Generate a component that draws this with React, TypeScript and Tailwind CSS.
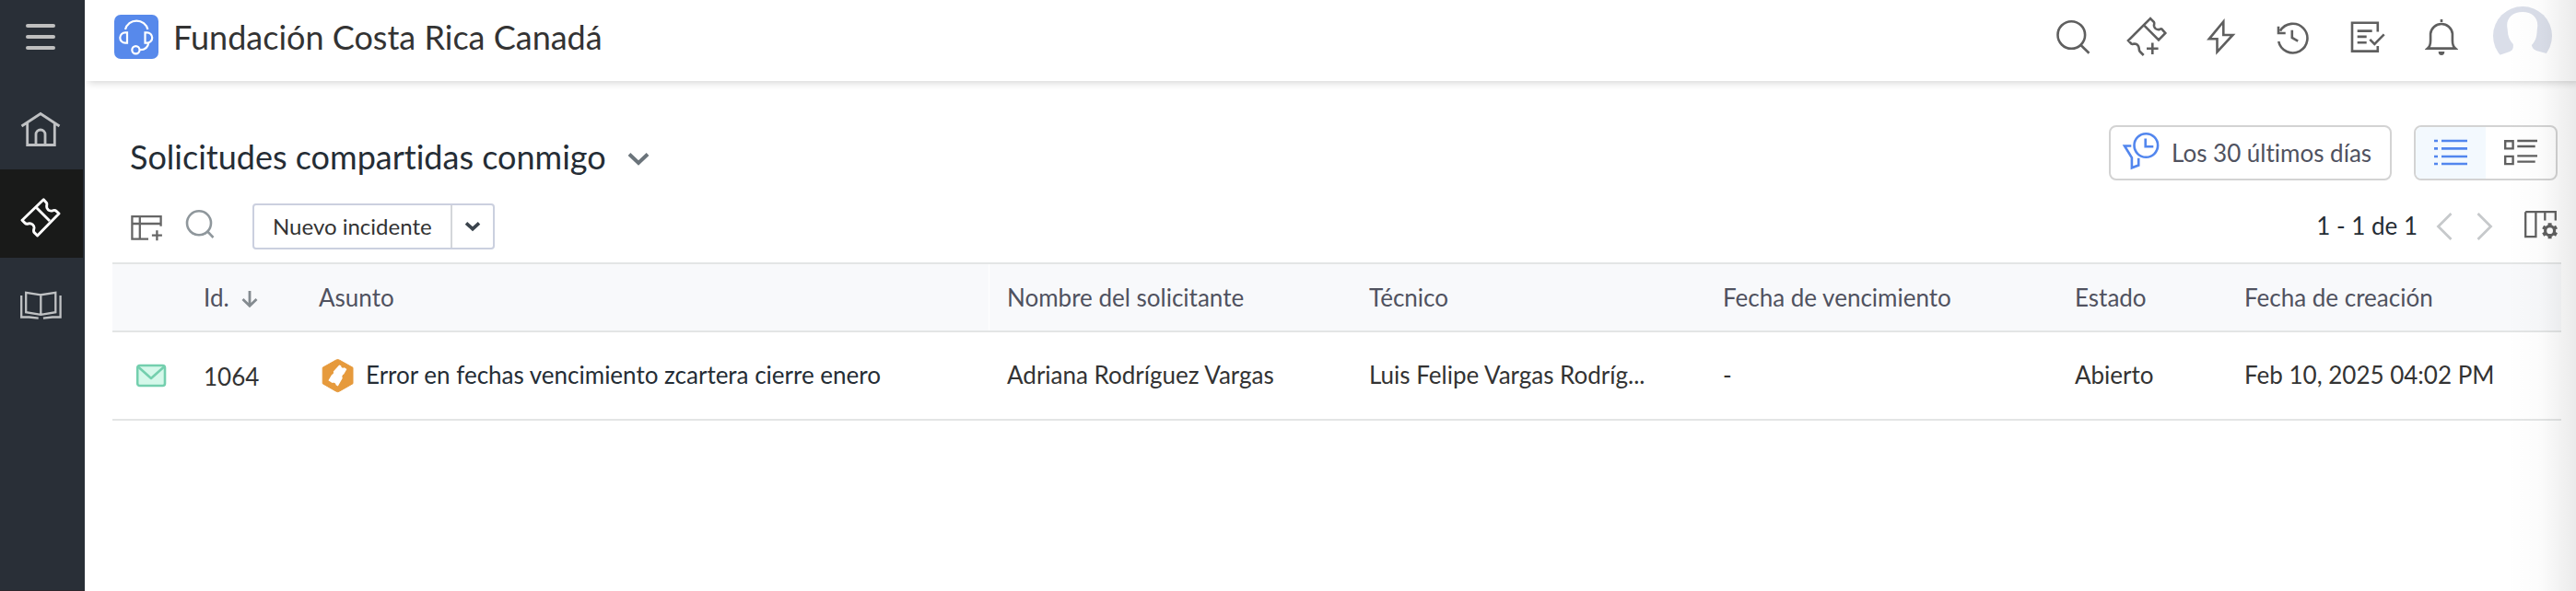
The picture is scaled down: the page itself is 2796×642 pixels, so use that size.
import React from 'react';

const COLS = 'grid grid-cols-[99px_125px_727px_413px_384px_382px_184px_1fr]';

const request = {
  id: '1064',
  subject: 'Error en fechas vencimiento zcartera cierre enero',
  requester: 'Adriana Rodríguez Vargas',
  technician: 'Luis Felipe Vargas Rodríg...',
  dueDate: '-',
  status: 'Abierto',
  created: 'Feb 10, 2025 04:02 PM',
};

interface IconProps {
  w: number;
  h: number;
  sw?: number;
  className?: string;
  children: React.ReactNode;
}

function Icon({ w, h, className = '', sw = 2.6, children }: IconProps) {
  return (
    <svg width={w} height={h} viewBox={`0 0 ${w} ${h}`} fill="none" stroke="currentColor" strokeWidth={sw} className={`shrink-0 ${className}`}>
      {children}
    </svg>
  );
}

function Sidebar() {
  return (
    <nav className="w-[92px] shrink-0 bg-[#292f37] border-b border-[#2d282d] text-[#bfc1c3] flex flex-col">
      <div className="h-[88px] pt-[26px] pl-7 flex flex-col gap-2">
        <span className="w-8 h-1 rounded-full bg-[#bfbfbf]"></span>
        <span className="w-8 h-1 rounded-full bg-[#bfbfbf]"></span>
        <span className="w-8 h-1 rounded-full bg-[#bfbfbf]"></span>
      </div>
      <a className="h-24 pt-8 pl-[22px]">
        <Icon w={44} h={40} sw={2.8}>
          <path d="M1.5 17 22 3.5 42.5 17M7.7 13.5v24h29.6v-24M17 37V26a5 5 0 0 1 10 0v11" />
        </Icon>
      </a>
      <a className="h-24 w-[90px] pt-[30px] pl-[22px] bg-[#191a19] text-white">
        <Icon w={44} h={44} sw={2.9}>
          <path strokeLinejoin="round" d="M25.3 2.8 28.6 6.4C29.5 8 28 9.5 29 12c1.2 2.8 3.8 3.6 6 2.8 2-.8 3-.6 4.2.6L42 18 18.6 42 15 38.4c-1-1.4-.4-2.4 0-4.6.4-3-2.6-5.4-5.4-5-2 .4-3 1-4.4-.4L2 25.3Z" />
          <path d="M17.7 11.7 32 26" />
        </Icon>
      </a>
      <a className="h-24 pt-[34px] pl-[22px]">
        <Icon w={46} h={34} sw={2.3}>
          <path d="M22.3 6.3 6.2 3.8v21.4l16.1 2.6 16-2.6V3.8L22.3 6.3V27.5M1.2 7v23.5h8.5l10 1.2M43.6 7v23.5h-8.7l-10 1.2" />
        </Icon>
      </a>
    </nav>
  );
}

function Logo() {
  return (
    <svg width="48" height="48" viewBox="0 0 48 48" fill="none" stroke="#fff" strokeWidth="2.2">
      <rect width="48" height="48" rx="7" fill="#5789eb" stroke="none" />
      <path d="M12 16a12.6 12.6 0 0 1 24.4 0M14 19.3v11.4h-2a5.7 5.7 0 0 1 0-11.4ZM33.5 19.3v11.4h2a5.7 5.7 0 0 0 0-11.4ZM28 38.2c5.2 0 8.6-2.6 9.2-7.6" />
      <circle cx="23.4" cy="38.3" r="4.1" />
    </svg>
  );
}

function Header() {
  return (
    <header className="h-[88px] shrink-0 relative pl-8 pr-[26px] flex items-start justify-between bg-white shadow-[4px_2px_8px_rgba(0,0,0,0.17)]">
      <div className="pt-4 flex items-center gap-4">
        <Logo />
        <h1 className="text-[36px] leading-[48px] text-[#333] -mt-px">Fundación Costa Rica Canadá</h1>
      </div>
      <div className="h-20 flex items-center text-[#5f5f5f]">
        <Icon w={40} h={40} className="mr-[38px]">
          <circle cx="18.3" cy="18" r="14.8" />
          <path d="m28 28.5 9.5 9.3" />
        </Icon>
        <Icon w={46} h={44} className="mr-10">
          <path d="m18.7 42-4-4c-1.4-1.4-.6-2.6-1.2-4.6-.7-2.6-2.6-3.9-5-3.9-1.4.2-2 .8-3 .2L2 26 26 2l4 4.2c.8 1-.3 2.3 0 4 .6 2.6 3 4.2 5.4 3.9 1.2-.2 2-1.4 3.1-.5l3.8 4.4-7.3 7.3L19.3 9.7M28.3 28.5V41M22 34.7h12.6" />
        </Icon>
        <Icon w={34} h={44} className="mr-[42px]">
          <path d="M19.3 5.5 3.8 24.3h8.7v14.2L29.5 20H19.3Z" />
        </Icon>
        <Icon w={38} h={38} className="mr-[42px] mt-0.5">
          <path d="M3.2 23A15.8 15.8 0 1 0 5 11.6M3 6.7V14h7.7M17.8 10.7V19l6.4 3.6" />
        </Icon>
        <Icon w={40} h={38} className="mr-[42px] mt-0.5">
          <path d="M30.8 12.5V2.8H3v30.8h27.8V28M8.7 11.6h16M8.7 17.9h10M8.7 24.3h10M22.3 20.8l5 5 10.4-10.5" />
        </Icon>
        <Icon w={36} h={44} className="mr-[38px]">
          <path d="M3 34.6h30c-2.4-2-3.1-4-3.1-8.6v-7.5a12 12 0 0 0-23.8 0V26c0 4.6-.7 6.6-3.1 8.6ZM18 3v3" />
          <path d="M14.7 38h6.6a3.3 4 0 0 1-6.6 0" fill="currentColor" stroke="none" />
        </Icon>
        <svg width="64" height="64" viewBox="0 0 64 64" className="shrink-0 -mt-0.5">
          <circle cx="32" cy="32" r="32" fill="#dadee9" />
          <path d="M32 6C22 6 15 12 15.2 20.5c0 2.5.6 4 .6 6 .2 6 2.3 10.500 6 14.500.4 5-.8 7-4.300 8.200L7.300 52.800 7 64h51V51l-9.500-2.600c-4.500-1.200-5.800-3-6.600-6.400 4-4 5.600-9 5.800-15.500 0-2 .6-3.500.6-6C48.500 12 42 6 32 6Z" fill="#fff" />
        </svg>
      </div>
    </header>
  );
}

function TitleBar() {
  return (
    <div className="pt-12 pl-[49px] pr-5 flex justify-between">
      <div className="pt-2 h-[60px] flex items-center gap-[23px]">
        <h2 className="text-[36px] leading-[48px] text-[#252d35]">Solicitudes compartidas conmigo</h2>
        <Icon w={24} h={16} sw={4} className="text-[#6b747b] mt-1.5">
          <path d="m2 2.5 10 9.5 10-9.5" />
        </Icon>
      </div>
      <div className="flex gap-6">
        <button className="w-[307px] h-[60px] pl-3 flex items-center gap-3 border-2 border-[#d3d3d3] rounded-lg text-[#50525f]">
          <Icon w={42} h={44} className="text-[#5286ee] -mt-1">
            <circle cx="26.3" cy="16" r="12.8" />
            <path d="M25.7 8.5v8.8h8.6M10.3 16.5H3l7.9 12.8v11l7.3-2.8v-7.8" />
          </Icon>
          <span>Los 30 últimos días</span>
        </button>
        <div className="w-[156px] h-[60px] flex border-2 border-[#d3d3d3] rounded-lg overflow-hidden">
          <button className="w-[76px] flex items-center justify-center bg-[#f3f9fe] text-[#5286ee]">
            <Icon w={36} h={30}>
              <path d="M8 2h28M8 10.4h28M8 19h28M8 27h28M0 2h4M0 10.4h4M0 19h4M0 27h4" />
            </Icon>
          </button>
          <button className="flex-1 flex items-center justify-center text-[#606060]">
            <Icon w={36} h={30} sw={2.4}>
              <path d="M1.2 2.2h8.4v8.2H1.2ZM1.2 18.9h8.4v8.2H1.2ZM14.3 2H36M14.3 8h19.4M14.3 18.4H36M14.3 24.6h19.4" />
            </Icon>
          </button>
        </div>
      </div>
    </div>
  );
}

function Toolbar() {
  return (
    <div className="h-[89px] pt-[25px] pl-[50px] pr-5 flex items-start justify-between">
      <div className="flex items-start">
        <Icon w={34} h={28} sw={2.3} className="mt-[13px] text-[#666]">
          <path d="M19 25.7H1.4V1.2h31.2v10.5M1.4 9h31.2M9.8 1.2v24.5M28.4 16.2v11M22.9 21.7h11" />
        </Icon>
        <Icon w={34} h={34} className="mt-[5px] ml-6 text-[#8f979c]">
          <circle cx="16" cy="16.3" r="13" />
          <path d="m25.3 25.5 6.2 6.5" />
        </Icon>
        <div className="ml-10 w-[263px] h-[50px] flex border-2 border-[#cbd0df] rounded">
          <button className="w-[215px] pl-5 text-left text-[24px] leading-[46px] text-[#333] border-r-2 border-[#d4d6da]">Nuevo incidente</button>
          <button className="flex-1 flex items-center justify-center text-[#3b444d]">
            <Icon w={18} h={12} sw={3.6}>
              <path d="m2 2.3 7 6.4 7-6.4" />
            </Icon>
          </button>
        </div>
      </div>
      <div className="flex items-center h-[50px]">
        <span className="leading-[46px] text-[#252d35] -mt-0.5 mr-5">1 - 1 de 1</span>
        <Icon w={18} h={30} sw={2.8} className="text-[#c6c9cb] mr-[26px]">
          <path d="M16.5 1 2.5 15l14 14" />
        </Icon>
        <Icon w={18} h={30} sw={2.8} className="text-[#c6c9cb] mr-[34px]">
          <path d="m1.5 1 14 14-14 14" />
        </Icon>
        <Icon w={36} h={32} sw={2.3} className="text-[#606060] -mt-1">
          <path d="M1.2 2.2h32.6v9.3M22.3 2.2v9.3M1.2 2.2v27h11.2v-27" />
          <circle cx="27.6" cy="22.7" r="5" strokeWidth="3.2" />
          <path strokeWidth="4" d="M27.6 14.2v3M27.6 28.2v3M20.2 18.5l2.6 1.5M32.4 25.5l2.6 1.5M20.2 27l2.6-1.5M32.4 20l2.6-1.5" />
        </Icon>
      </div>
    </div>
  );
}

function RequestTable() {
  return (
    <div className="ml-[30px] mr-4">
      {/* Column headings */}
      <div className={`${COLS} h-[76px] items-center bg-[#f8f9fb] border-y-2 border-[#e3e5e5] text-[#50525f]`}>
        <span></span>
        <span className="flex items-center gap-[13px]">
          Id.
          <Icon w={18} h={20} sw={2.8} className="text-[#848b90] mt-1">
            <path d="M9 1v16M1.5 10 9 17.3l7.5-7.3" />
          </Icon>
        </span>
        <span>Asunto</span>
        <span className="h-full flex items-center pl-[19px] border-l border-white">Nombre del solicitante</span>
        <span>Técnico</span>
        <span>Fecha de vencimiento</span>
        <span>Estado</span>
        <span>Fecha de creación</span>
      </div>

      {/* Request row */}
      <div className={`${COLS} h-24 pb-0.5 items-center border-b-2 border-[#e3e5e5] text-[#333]`}>
        <span className="pl-[25px] pt-0.5">
          <svg width="34" height="26" viewBox="0 0 34 26" fill="#d5f8ea" stroke="#74cfae" strokeWidth="2.6" strokeLinejoin="round">
            <rect x="2.2" y="2" width="29.8" height="22" rx="2.5" />
            <path d="m3 3.5 14 12.5 14-12.5" fill="none" />
          </svg>
        </span>
        <span className="pt-1">{request.id}</span>
        <span className="flex items-center gap-3 text-[#252d35]">
          <svg width="36" height="38" viewBox="0 0 36 38" className="ml-[3px] mt-0.5 shrink-0">
            <path d="M19.5 2.2 34 10.3v17.4l-14.5 8.3-1.9.7-2-.7L1.2 27.7V10.3l14.4-8.1 2-.7Z" fill="#e69a3c" stroke="#e69a3c" strokeLinejoin="round" />
            <path d="m19.2 7.500 2 .8c0 2 1.600 2.900 3.600 2l2.600 1.600-3.200 5.700c-1.900 1-2.300 2.600-1.400 4.200l-5 8.600-2.200-1.200c0-2-1.700-3.200-4-2.200l-4.200-2.700 3.700-6.200c1.700-.6 2.300-2.100 1.700-3.700Z" fill="#fff" />
          </svg>
          <span>{request.subject}</span>
        </span>
        <span className="pl-5">{request.requester}</span>
        <span>{request.technician}</span>
        <span>{request.dueDate}</span>
        <span>{request.status}</span>
        <span>{request.created}</span>
      </div>
    </div>
  );
}

export default function App() {
  return (
    <div className="relative w-[2796px] h-[642px] flex overflow-hidden bg-white font-[Lato,sans-serif] text-[26px] leading-[40px] [font-variant-ligatures:none]">
      <Sidebar />
      <div className="flex-1 flex flex-col">
        <Header />
        <TitleBar />
        <Toolbar />
        <RequestTable />
      </div>
      {/* Shade along the right edge */}
      <div className="absolute inset-y-0 right-0 w-[76px] bg-gradient-to-r from-transparent via-black/[0.015] to-black/[0.08] pointer-events-none"></div>
    </div>
  );
}
